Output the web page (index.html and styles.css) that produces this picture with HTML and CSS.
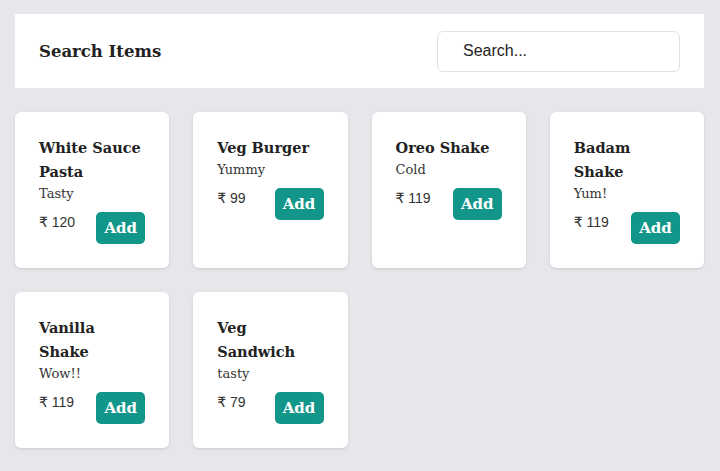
FILE: index.html
```html
<!DOCTYPE html>
<html lang="en">
<head>
<meta charset="utf-8">
<title>Search Items</title>
<link rel="stylesheet" href="styles.css">
</head>
<body>
<div class="page">
  <header class="topbar">
    <h1 class="title">Search Items</h1>
    <input class="search" type="text" placeholder="Search...">
  </header>
  <main class="grid">
    <div class="card">
      <h2 class="name">White Sauce Pasta</h2>
      <p class="desc">Tasty</p>
      <div class="row"><span class="price">₹ 120</span><button class="add">Add</button></div>
    </div>
    <div class="card">
      <h2 class="name">Veg Burger</h2>
      <p class="desc">Yummy</p>
      <div class="row"><span class="price">₹ 99</span><button class="add">Add</button></div>
    </div>
    <div class="card">
      <h2 class="name">Oreo Shake</h2>
      <p class="desc">Cold</p>
      <div class="row"><span class="price">₹ 119</span><button class="add">Add</button></div>
    </div>
    <div class="card">
      <h2 class="name">Badam Shake</h2>
      <p class="desc">Yum!</p>
      <div class="row"><span class="price">₹ 119</span><button class="add">Add</button></div>
    </div>
    <div class="card">
      <h2 class="name">Vanilla Shake</h2>
      <p class="desc">Wow!!</p>
      <div class="row"><span class="price">₹ 119</span><button class="add">Add</button></div>
    </div>
    <div class="card">
      <h2 class="name">Veg Sandwich</h2>
      <p class="desc">tasty</p>
      <div class="row"><span class="price">₹ 79</span><button class="add">Add</button></div>
    </div>
  </main>
</div>
</body>
</html>
```
FILE: styles.css
```css
* { box-sizing: border-box; }
html, body { margin: 0; padding: 0; }
body {
  background: #e5e7eb;
  font-family: "DejaVu Serif", Georgia, serif;
  color: #222;
}
.page {
  padding: 14px 16px 15px 15px;
}
.topbar {
  background: #fff;
  height: 74px;
  display: flex;
  align-items: center;
  justify-content: space-between;
  padding: 0 24px;
}
.title {
  margin: 0;
  font-size: 16.5px;
  font-weight: bold;
  color: #222;
}
.search {
  width: 243px;
  height: 41px;
  border: 1px solid #dfe1e5;
  border-radius: 6px;
  padding: 0 25px;
  font-family: "Liberation Sans", Arial, sans-serif;
  font-size: 16px;
  color: #222;
  outline: none;
}
.search::placeholder { color: #222; opacity: 1; }
.grid {
  margin-top: 24px;
  display: grid;
  grid-template-columns: repeat(4, 1fr);
  gap: 24px;
}
.card {
  background: #fff;
  border-radius: 6px;
  padding: 24px;
  box-shadow: 0 1px 3px rgba(0,0,0,0.12);
  display: flex;
  flex-direction: column;
}
.name {
  margin: 0;
  font-size: 14.5px;
  line-height: 24px;
  font-weight: bold;
  color: #222;
}
.desc {
  margin: 0;
  font-size: 13px;
  line-height: 20px;
  color: #333;
}
.row {
  margin-top: 8px;
  display: flex;
  justify-content: space-between;
  align-items: flex-start;
}
.price {
  font-family: "Liberation Sans", "DejaVu Sans", Arial, sans-serif;
  font-size: 14px;
  line-height: 20px;
  color: #333;
}
.add {
  width: 49px;
  height: 32px;
  border: none;
  border-radius: 5px;
  background: #13968a;
  color: #fff;
  font-family: "DejaVu Serif", Georgia, serif;
  font-weight: bold;
  font-size: 15px;
  padding: 0;
}
```
